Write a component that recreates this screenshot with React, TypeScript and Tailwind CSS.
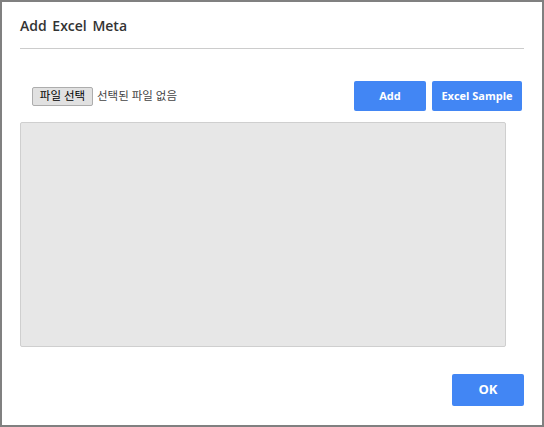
export default function App() {
  return (
    <div className="flex h-[427px] w-[544px] flex-col border-2 border-[#808080] bg-white px-[18px] font-['Open_Sans','Noto_Sans_CJK_KR',sans-serif]">
      <div className="pt-[14px] text-[14px] font-semibold leading-5 text-[#333] [word-spacing:2px]">Add Excel Meta</div>
      <div className="mt-3 h-px w-[504px] bg-[#cccccc]" />

      <div className="mt-[32px] flex h-[30px] items-center">
        <div className="ml-[12px] flex items-center gap-[4px] text-[11.5px] text-[#444]">
          <button className="h-[19px] w-[61px] rounded-[2px] border border-[#adadad] bg-[#e1e1e1] text-[11.5px] leading-none text-black">
            파일 선택
          </button>
          <span>선택된 파일 없음</span>
        </div>
        <div className="ml-auto mr-[2px] flex gap-[6px]">
          <button className="h-[30px] w-[72px] rounded-[2px] bg-[#4286f4] text-[11px] font-bold text-white">Add</button>
          <button className="h-[30px] w-[90px] rounded-[2px] bg-[#4286f4] text-[11px] font-bold text-white">
            Excel Sample
          </button>
        </div>
      </div>

      <div className="mt-[11px] h-[225px] w-[486px] rounded-[2px] border border-[#cfcfcf] bg-[#e7e7e7]" />

      <div className="mt-[27px] flex justify-end">
        <button className="h-[32px] w-[72px] rounded-[2px] bg-[#4286f4] text-[13px] font-bold text-white">OK</button>
      </div>
    </div>
  );
}
